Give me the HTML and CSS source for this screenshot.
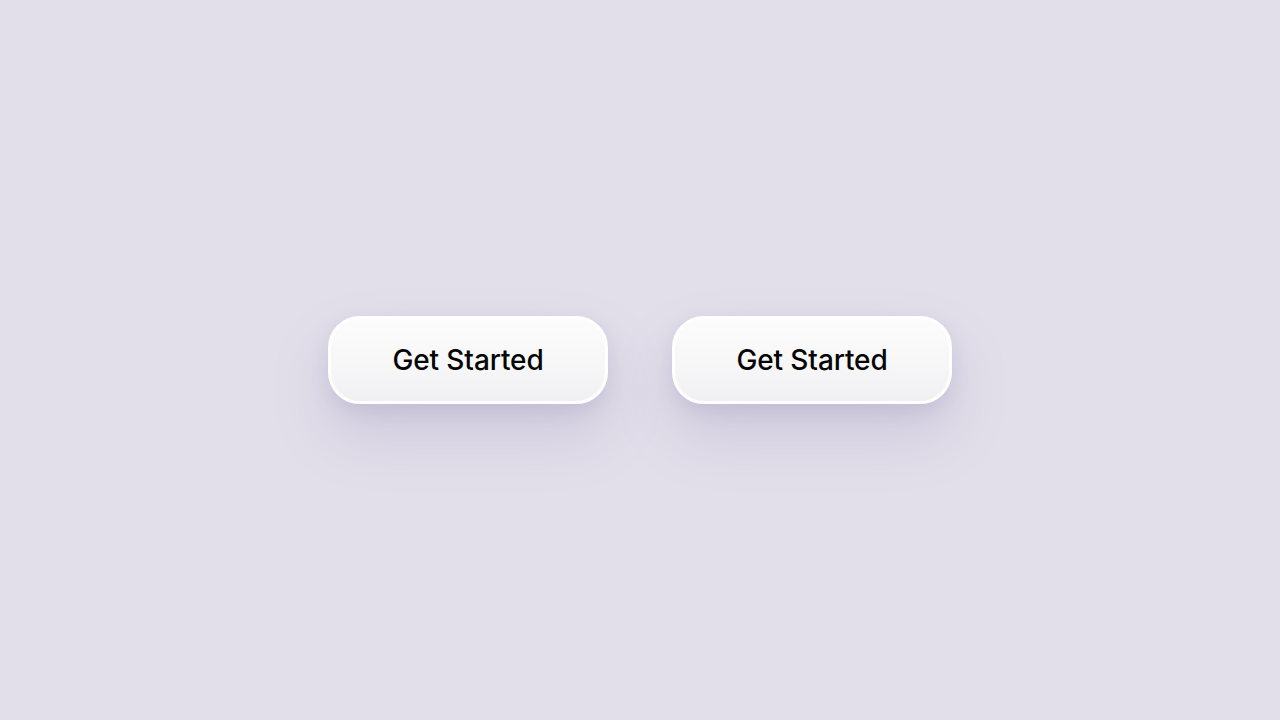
FILE: index.html
```html
<!DOCTYPE html>
<html>
<head>
<meta charset="utf-8">
<link rel="stylesheet" href="styles.css">
</head>
<body>
<main class="stage">
  <button class="btn">Get Started</button>
  <button class="btn">Get Started</button>
</main>
</body>
</html>
```
FILE: styles.css
```css
html, body {
  margin: 0;
  padding: 0;
  height: 100%;
}
body {
  background: #e2dfea;
  font-family: Inter, "Noto Sans", sans-serif;
}
.stage {
  height: 720px;
  display: flex;
  align-items: center;
  justify-content: center;
  gap: 64px;
}
.btn {
  box-sizing: border-box;
  width: 280px;
  height: 88px;
  border: 3px solid #ffffff;
  border-radius: 32px;
  background: linear-gradient(180deg, #fcfcfc 0%, #f7f7f8 55%, #f0f0f2 100%);
  color: #050505;
  font-family: Inter, "Noto Sans", sans-serif;
  font-size: 28px;
  font-weight: 500;
  letter-spacing: -0.1px;
  box-shadow: 0 30px 60px rgba(120, 110, 160, 0.2), 0 8px 18px rgba(120, 110, 160, 0.14);
  padding: 0;
  cursor: pointer;
}
```
